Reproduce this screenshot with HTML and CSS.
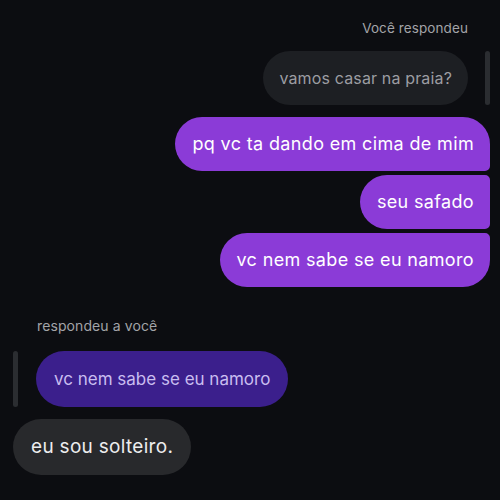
FILE: index.html
```html
<!DOCTYPE html>
<html lang="pt">
<head>
<meta charset="utf-8">
<link rel="stylesheet" href="styles.css">
</head>
<body>
<div class="chat">
  <section class="group mine">
    <div class="label">Você respondeu</div>
    <div class="reply-row">
      <div class="bubble quoted">vamos casar na praia?</div>
      <div class="bar"></div>
    </div>
    <div class="stack">
      <div class="bubble sent first">pq vc ta dando em cima de mim</div>
      <div class="bubble sent middle">seu safado</div>
      <div class="bubble sent last">vc nem sabe se eu namoro</div>
    </div>
  </section>
  <section class="group theirs">
    <div class="label">respondeu a você</div>
    <div class="reply-row">
      <div class="bar"></div>
      <div class="bubble quoted-purple">vc nem sabe se eu namoro</div>
    </div>
    <div class="bubble received">eu sou solteiro.</div>
  </section>
</div>
</body>
</html>
```

FILE: styles.css
```css
* { box-sizing: border-box; }
html, body {
  margin: 0;
  height: 100%;
  background: #0c0d11;
}
body {
  font-family: Inter, "Noto Sans", sans-serif;
  overflow: hidden;
}
.chat {
  display: flex;
  flex-direction: column;
  padding-top: 19px;
}
.group {
  display: flex;
  flex-direction: column;
}
.mine {
  align-items: flex-end;
  padding-right: 10px;
}
.theirs {
  align-items: flex-start;
  padding-left: 13px;
  margin-top: 30px;
}
.label {
  font-size: 13.5px;
  line-height: 18px;
  color: #a3a4a8;
  letter-spacing: 0.1px;
}
.mine .label { margin-right: 22px; }
.theirs .label { margin-left: 24px; font-size: 14px; }
.reply-row {
  display: flex;
  align-items: stretch;
  margin-top: 14px;
}
.mine .reply-row { gap: 17px; }
.theirs .reply-row { gap: 18px; margin-top: 16px; }
.bar {
  width: 5px;
  border-radius: 3px;
  background: #2b2d31;
}
.bubble {
  font-size: 17px;
  line-height: 22px;
  padding: 16px 16px;
  border-radius: 27px;
  white-space: nowrap;
}
.quoted {
  background: #1d1f23;
  color: #9c9da2;
  font-size: 16px;
  letter-spacing: 0.15px;
}
.stack {
  display: flex;
  flex-direction: column;
  align-items: flex-end;
  gap: 4px;
  margin-top: 12px;
}
.sent {
  background: #8b3bd7;
  color: #ffffff;
  font-size: 18px;
  letter-spacing: 0.35px;
  padding-left: 17px;
}
.first { border-radius: 27px 27px 5px 27px; }
.middle { border-radius: 27px 5px 5px 27px; }
.last { border-radius: 27px 5px 27px 27px; }
.quoted-purple {
  background: #3b1f8c;
  color: #c9bdf0;
  padding: 17px 18px;
  border-radius: 28px;
}
.received {
  margin-top: 12px;
  background: #28292c;
  color: #ededee;
  font-size: 19px;
  letter-spacing: 0.3px;
  padding: 17px 18px;
  border-radius: 28px;
}
```
